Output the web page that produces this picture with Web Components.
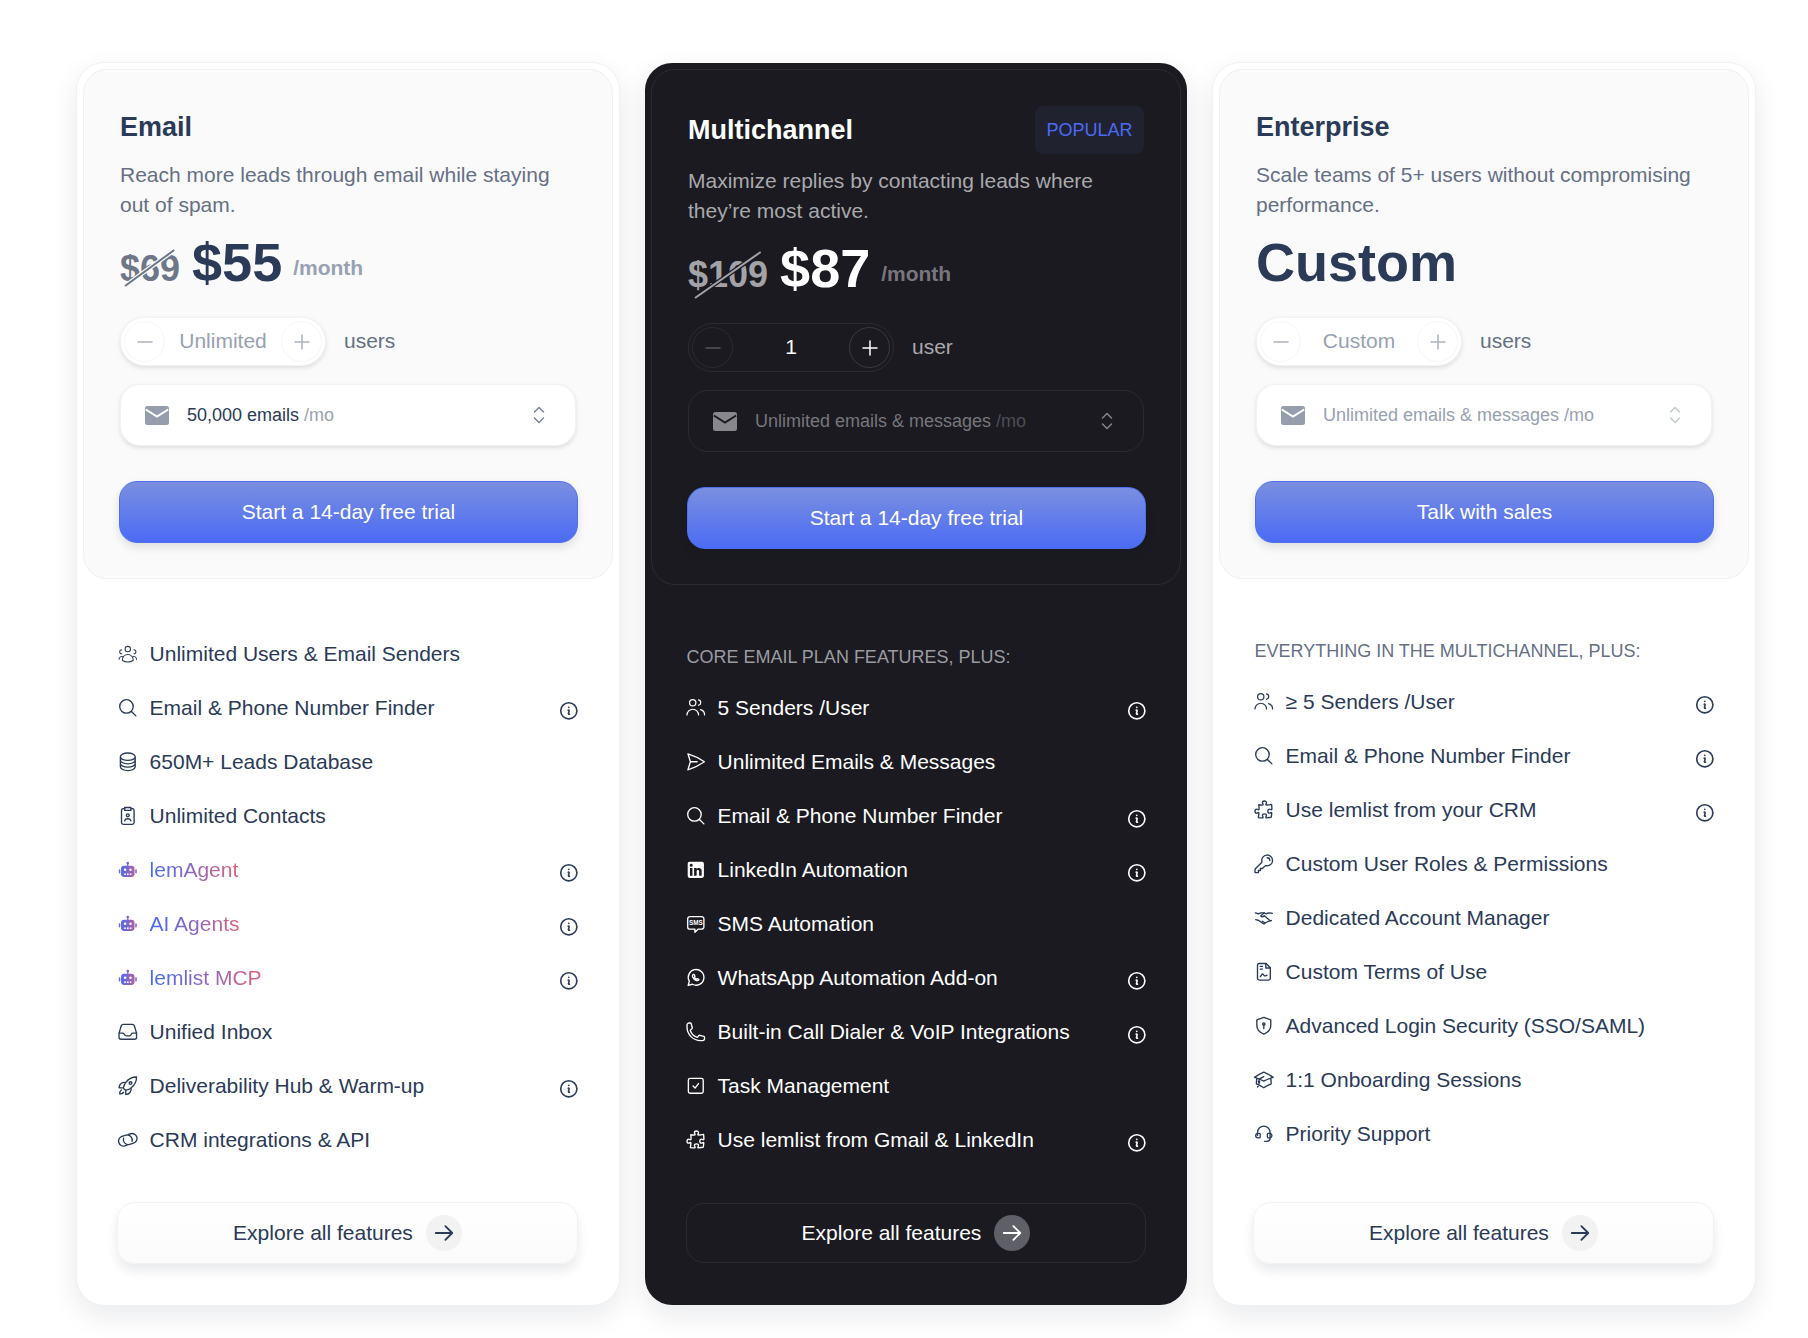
<!DOCTYPE html>
<html lang="en">
<head>
<meta charset="utf-8">
<title>Pricing</title>
<style>
    body {
        margin: 0;
        background: #ffffff;
        font-family: "Liberation Sans", Arial, sans-serif;
    }
</style>
</head>
<body>

<pricing-page>
    <plan-card>
        <span slot="title">Email</span>
        <span slot="desc">Reach more leads through email while staying out of spam.</span>
        <plan-price slot="price" old="$69" amount="$55"></plan-price>
        <seat-stepper slot="stepper" value="Unlimited" label="users"></seat-stepper>
        <volume-select slot="volume" suffix="/mo" strong>50,000 emails</volume-select>
        <cta-button slot="cta">Start a 14-day free trial</cta-button>

        <feature-item icon="userGroup">Unlimited Users &amp; Email Senders</feature-item>
        <feature-item icon="search" info>Email &amp; Phone Number Finder</feature-item>
        <feature-item icon="database">650M+ Leads Database</feature-item>
        <feature-item icon="contact">Unlimited Contacts</feature-item>
        <feature-item icon="robot" info ai>lemAgent</feature-item>
        <feature-item icon="robot" info ai>AI Agents</feature-item>
        <feature-item icon="robot" info ai>lemlist MCP</feature-item>
        <feature-item icon="inbox">Unified Inbox</feature-item>
        <feature-item icon="rocket" info>Deliverability Hub &amp; Warm-up</feature-item>
        <feature-item icon="link">CRM integrations &amp; API</feature-item>

        <explore-link slot="footer">Explore all features</explore-link>
    </plan-card>

    <plan-card dark>
        <span slot="title">Multichannel</span>
        <span slot="badge">POPULAR</span>
        <span slot="desc">Maximize replies by contacting leads where they’re most active.</span>
        <plan-price slot="price" old="$109" amount="$87" wide></plan-price>
        <seat-stepper slot="stepper" value="1" label="user" active></seat-stepper>
        <volume-select slot="volume" suffix="/mo">Unlimited emails &amp; messages</volume-select>
        <cta-button slot="cta">Start a 14-day free trial</cta-button>

        <span slot="label">Core email plan features, plus:</span>
        <feature-item icon="users" info>5 Senders /User</feature-item>
        <feature-item icon="send">Unlimited Emails &amp; Messages</feature-item>
        <feature-item icon="search" info>Email &amp; Phone Number Finder</feature-item>
        <feature-item icon="linkedin" info>LinkedIn Automation</feature-item>
        <feature-item icon="sms">SMS Automation</feature-item>
        <feature-item icon="whatsapp" info>WhatsApp Automation Add-on</feature-item>
        <feature-item icon="phone" info>Built-in Call Dialer &amp; VoIP Integrations</feature-item>
        <feature-item icon="task">Task Management</feature-item>
        <feature-item icon="puzzle" info>Use lemlist from Gmail &amp; LinkedIn</feature-item>

        <explore-link slot="footer">Explore all features</explore-link>
    </plan-card>

    <plan-card>
        <span slot="title">Enterprise</span>
        <span slot="desc">Scale teams of 5+ users without compromising performance.</span>
        <plan-price slot="price" amount="Custom"></plan-price>
        <seat-stepper slot="stepper" value="Custom" label="users"></seat-stepper>
        <volume-select slot="volume" suffix="/mo" faded>Unlimited emails &amp; messages</volume-select>
        <cta-button slot="cta">Talk with sales</cta-button>

        <span slot="label">Everything in the Multichannel, plus:</span>
        <feature-item icon="users" info>≥ 5 Senders /User</feature-item>
        <feature-item icon="search" info>Email &amp; Phone Number Finder</feature-item>
        <feature-item icon="puzzle" info>Use lemlist from your CRM</feature-item>
        <feature-item icon="key">Custom User Roles &amp; Permissions</feature-item>
        <feature-item icon="handshake">Dedicated Account Manager</feature-item>
        <feature-item icon="document">Custom Terms of Use</feature-item>
        <feature-item icon="shield">Advanced Login Security (SSO/SAML)</feature-item>
        <feature-item icon="cap">1:1 Onboarding Sessions</feature-item>
        <feature-item icon="headset">Priority Support</feature-item>

        <explore-link slot="footer">Explore all features</explore-link>
    </plan-card>
</pricing-page>

<script>
const ICONS = {
    userGroup: '<g stroke-width="1.15"><circle cx="12" cy="6.750" r="3"/><path d="M6 18.700a6 6 0 0 1 12 0"/><path d="M6 19.400A11.900 11.900 0 0 0 12 21a11.900 11.900 0 0 0 6-1.600"/><path d="M5.250 7.500a2.250 2.250 0 1 0 0 4.500M18.750 7.500a2.250 2.250 0 1 1 0 4.500"/><path d="M2.300 18.200a3 3 0 0 1 4.600-2.700M21.700 18.200a3 3 0 0 0-4.600-2.700"/></g>',
    users: '<g stroke-width="1.350"><circle cx="8.600" cy="6.400" r="3.500"/><path d="M2.250 20a6.400 6.400 0 0 1 12.800 0"/><path d="M15 3.300a3 3 0 0 1 0 5.900"/><path d="M17.300 14.100a6 6 0 0 1 4.450 5.800"/></g>',
    search: '<path d="m21 21-5.197-5.197m0 0A7.5 7.5 0 1 0 5.196 5.196a7.5 7.5 0 0 0 10.607 10.607Z"/>',
    database: '<path d="M20.25 6.375c0 2.278-3.694 4.125-8.25 4.125S3.75 8.653 3.75 6.375m16.5 0c0-2.278-3.694-4.125-8.25-4.125S3.75 4.097 3.75 6.375m16.5 0v11.25c0 2.278-3.694 4.125-8.25 4.125s-8.25-1.847-8.25-4.125V6.375m16.5 0v3.75m-16.5-3.75v3.75m16.5 0v3.75C20.25 16.153 16.556 18 12 18s-8.25-1.847-8.25-4.125v-3.75m16.5 0c0 2.278-3.694 4.125-8.25 4.125s-8.25-1.847-8.25-4.125"/>',
    contact: '<path d="M8.5 4H7a2 2 0 0 0-2 2v13.5a2 2 0 0 0 2 2h10a2 2 0 0 0 2-2V6a2 2 0 0 0-2-2h-1.5"/><path d="M8.5 2.75h7V6h-7z"/><circle cx="12" cy="11.5" r="1.6"/><path d="M8.5 17.5c.5-1.7 2-2.2 3.500-2.200s3 .5 3.500 2.200"/>',
    inbox: '<path d="M2.25 13.5h3.86a2.25 2.25 0 0 1 2.012 1.244l.256.512a2.25 2.25 0 0 0 2.013 1.244h3.218a2.25 2.25 0 0 0 2.013-1.244l.256-.512a2.25 2.25 0 0 1 2.013-1.244h3.859m-19.5.338V18a2.25 2.25 0 0 0 2.25 2.25h15A2.25 2.25 0 0 0 21.75 18v-4.162c0-.224-.034-.447-.1-.661L19.24 5.338a2.25 2.25 0 0 0-2.15-1.588H6.911a2.25 2.25 0 0 0-2.15 1.588L2.35 13.177a2.25 2.25 0 0 0-.1.661Z"/>',
    rocket: '<path d="M15.59 14.37a6 6 0 0 1-5.84 7.38v-4.8m5.84-2.58a14.98 14.98 0 0 0 6.16-12.12A14.98 14.98 0 0 0 9.631 8.41m5.96 5.96a14.926 14.926 0 0 1-5.841 2.58m-.119-8.54a6 6 0 0 0-7.381 5.84h4.8m2.581-5.84a14.927 14.927 0 0 0-2.58 5.84m2.699 2.7c-.103.021-.207.041-.311.06a15.09 15.09 0 0 1-2.448-2.448 14.9 14.9 0 0 1 .06-.312m-2.24 2.39a4.493 4.493 0 0 0-1.757 4.306 4.493 4.493 0 0 0 4.306-1.758M16.5 9a1.5 1.5 0 1 1-3 0 1.5 1.5 0 0 1 3 0Z"/>',
    link: '<g transform="rotate(-17 12 12)"><path d="M9.500 17.500H7a5.500 5.500 0 0 1 0-11h4.500a5.500 5.500 0 0 1 4.500 8.500"/><path d="M14.500 6.500H17a5.500 5.500 0 0 1 0 11h-4.500A5.500 5.500 0 0 1 8 9"/></g>',
    send: '<path d="M6 12 3.269 3.125A59.769 59.769 0 0 1 21.485 12 59.768 59.768 0 0 1 3.27 20.875L5.999 12Zm0 0h7.5"/>',
    phone: '<path d="M2.25 6.75c0 8.284 6.716 15 15 15h2.25a2.25 2.25 0 0 0 2.25-2.25v-1.372c0-.516-.351-.966-.852-1.091l-4.423-1.106c-.44-.11-.902.055-1.173.417l-.97 1.293c-.282.376-.769.542-1.21.38a12.035 12.035 0 0 1-7.143-7.143c-.162-.441.004-.928.38-1.21l1.293-.97c.363-.271.527-.734.417-1.173L6.963 3.102a1.125 1.125 0 0 0-1.091-.852H4.5A2.25 2.25 0 0 0 2.25 4.5v2.25Z"/>',
    puzzle: '<path d="M14.25 6.087c0-.355.186-.676.401-.959.221-.29.349-.634.349-1.003 0-1.036-1.007-1.875-2.25-1.875s-2.25.84-2.25 1.875c0 .369.128.713.349 1.003.215.283.401.604.401.959a.64.64 0 0 1-.657.643 48.39 48.39 0 0 1-4.163-.3c.186 1.613.293 3.25.315 4.907a.656.656 0 0 1-.658.663c-.355 0-.676-.186-.959-.401a1.647 1.647 0 0 0-1.003-.349c-1.036 0-1.875 1.007-1.875 2.25s.84 2.25 1.875 2.25c.369 0 .713-.128 1.003-.349.283-.215.604-.401.959-.401.31 0 .555.26.532.57a48.039 48.039 0 0 1-.642 5.056c1.518.19 3.058.309 4.616.354a.64.64 0 0 0 .657-.643c0-.355-.186-.676-.401-.959a1.647 1.647 0 0 1-.349-1.003c0-1.035 1.008-1.875 2.25-1.875 1.243 0 2.25.84 2.25 1.875 0 .369-.128.713-.349 1.003-.215.283-.4.604-.4.959 0 .333.277.599.61.58a48.1 48.1 0 0 0 5.427-.63 48.05 48.05 0 0 0 .582-4.717.532.532 0 0 0-.533-.57c-.355 0-.676.186-.959.401-.29.221-.634.349-1.003.349-1.035 0-1.875-1.007-1.875-2.25s.84-2.25 1.875-2.25c.37 0 .713.128 1.003.349.283.215.604.401.96.401a.656.656 0 0 0 .658-.663 48.422 48.422 0 0 0-.37-5.36c-1.886.342-3.81.574-5.766.689a.578.578 0 0 1-.61-.58Z"/>',
    key: '<path d="M15.750 5.25a3 3 0 0 1 3 3m3 0a6 6 0 0 1-7.029 5.912c-.563-.097-1.159.026-1.563.43L10.5 17.25H8.25v2.25H6v2.25H2.25v-2.818c0-.597.237-1.17.659-1.591l6.499-6.499c.404-.404.527-1 .43-1.563A6 6 0 1 1 21.75 8.25Z"/>',
    cap: '<path d="M4.26 10.147a60.438 60.438 0 0 0-.491 6.347A48.62 48.62 0 0 1 12 20.904a48.62 48.62 0 0 1 8.232-4.41 60.46 60.46 0 0 0-.491-6.347m-15.482 0a50.636 50.636 0 0 0-2.658-.813A59.906 59.906 0 0 1 12 3.493a59.903 59.903 0 0 1 10.399 5.84c-.896.248-1.783.52-2.658.814m-15.482 0A50.717 50.717 0 0 1 12 13.489a50.702 50.702 0 0 1 7.74-3.342M6.75 15a.75.75 0 1 0 0-1.5.75.75 0 0 0 0 1.5Zm0 0v-3.675A55.378 55.378 0 0 1 12 8.443m-7.007 11.55A5.981 5.981 0 0 0 6.750 15.75v-1.5"/>',
    handshake: '<path d="M2.500 6.500 6 7.500l3-1h3.500l2 1 3-1 4 .5"/><path d="M12.500 6.500 8.500 10c1.300 1.200 2.800 1 4-.2l6 5"/><path d="M3 14l3.500 1 5 3.500c1 .5 2 0 2.200-1l3.300-1.500 3.500-1"/><path d="M10.500 15.800l2.500 1.700"/>',
    document: '<path d="M7 2.750h7.500l4.750 4.750v11.750a2 2 0 0 1-2 2H7a2 2 0 0 1-2-2V4.750a2 2 0 0 1 2-2Z"/><path d="M14.250 2.750v5h5"/><path d="M8 6h2.500M8 9h2.500"/><path d="M8 17.500c1-.5 1.500-3 2.500-3s1.500 2 2.500 2 1.500-.7 2.500-.7"/>',
    shield: '<path d="M12 2.750 19.750 5.500v6c0 4.700-3.100 8-7.750 9.750-4.650-1.750-7.750-5.050-7.750-9.750v-6Z"/><circle cx="12" cy="10" r="1.300"/><path d="M12 11.300v3.700"/>',
    headset: '<path d="M5 14v-3.500a7 7 0 0 1 14 0V17a3.500 3.500 0 0 1-3.500 3.500H13"/><path d="M5.500 11.500H7a1 1 0 0 1 1 1v3a1 1 0 0 1-1 1H5.500A2.500 2.500 0 0 1 3 14a2.500 2.500 0 0 1 2.500-2.500Z"/><path d="M18.500 11.500H17a1 1 0 0 0-1 1v3a1 1 0 0 0 1 1h1.500A2.500 2.500 0 0 0 21 14a2.500 2.500 0 0 0-2.500-2.500Z"/>',
    whatsapp: '<path d="M3.500 20.500 4.800 15.900A8.700 8.700 0 1 1 8.200 19.200Z"/><path d="M9 8.300c-.8.600-1 1.600-.5 2.800.8 1.800 2.300 3.200 4.200 3.900 1.200.4 2.200 0 2.800-.9l-1.800-1.200-.9.700c-1-.5-1.900-1.300-2.400-2.400l.7-.9-.9-2Z"/>',
    task: '<rect x="3.750" y="3.750" width="16.500" height="16.500" rx="2"/><path d="m9 12.200 2.200 2.300L15 9.500"/>',
    sms: '<path d="M5.500 4h13A2.500 2.500 0 0 1 21 6.500v9a2.500 2.500 0 0 1-2.500 2.500h-4l-3.500 3.500V18H5.500A2.500 2.500 0 0 1 3 15.500v-9A2.500 2.500 0 0 1 5.500 4Z"/><text x="12" y="13.300" text-anchor="middle" font-size="7" font-weight="700" fill="currentColor" stroke="none" font-family="Liberation Sans, sans-serif">SMS</text>',
    linkedin: '<path fill="currentColor" stroke="none" d="M19 3a2 2 0 0 1 2 2v14a2 2 0 0 1-2 2H5a2 2 0 0 1-2-2V5a2 2 0 0 1 2-2h14m-.5 15.500v-5.300a3.260 3.260 0 0 0-3.260-3.260c-.85 0-1.840.52-2.320 1.300v-1.110h-2.790v8.370h2.790v-4.930c0-.77.62-1.400 1.390-1.400a1.400 1.400 0 0 1 1.400 1.400v4.930h2.790M6.880 8.560a1.680 1.680 0 0 0 1.680-1.680c0-.93-.75-1.690-1.680-1.690a1.690 1.690 0 0 0-1.690 1.690c0 .93.76 1.680 1.690 1.680m1.390 9.940v-8.370H5.500v8.370h2.770z"/>',
    robot: '<defs><linearGradient id="bot" x1="0" x2="1" y1="0" y2="0"><stop offset="0" stop-color="#4b6bf5"/><stop offset="1" stop-color="#b45f9f"/></linearGradient></defs><g fill="url(#bot)" stroke="none"><circle cx="12" cy="4.500" r="1.500"/><rect x="11.300" y="5" width="1.400" height="3"/><rect x="4.500" y="7.500" width="15" height="12.500" rx="3.500"/><rect x="2" y="11.500" width="1.700" height="4.500" rx=".85"/><rect x="20.300" y="11.500" width="1.700" height="4.500" rx=".85"/></g><g fill="#fff" stroke="none"><circle cx="9" cy="12" r="1.400"/><circle cx="15" cy="12" r="1.400"/><rect x="8" y="16" width="1.800" height="1.800"/><rect x="11.100" y="16" width="1.800" height="1.800"/><rect x="14.200" y="16" width="1.800" height="1.800"/></g>',
    info: '<path d="m11.250 11.250.041-.02a.75.75 0 0 1 1.063.852l-.708 2.836a.75.75 0 0 0 1.063.853l.041-.021M21 12a9 9 0 1 1-18 0 9 9 0 0 1 18 0Zm-9-3.750h.008v.008H12V8.250Z"/>',
    arrow: '<path d="M13.500 4.500 21 12m0 0-7.500 7.500M21 12H3"/>',
    minus: '<path d="M5 12h14"/>',
    plus: '<path d="M12 5v14M5 12h14"/>'
};

// small helper so each component does not repeat the svg attributes
function iconSvg(name, width, stroke = 1.5) {
    return `<svg xmlns="http://www.w3.org/2000/svg" viewBox="0 0 24 24" width="${width}" height="${width}" fill="none" stroke="currentColor" stroke-width="${stroke}" stroke-linecap="round" stroke-linejoin="round" aria-hidden="true">${ICONS[name]}</svg>`;
}

class PricingPage extends HTMLElement {
    constructor() {
        super();
        this.attachShadow({ mode: 'open' });
        this.shadowRoot.innerHTML = `
            <style>
                :host {
                    display: grid;
                    grid-template-columns: repeat(3, 544px);
                    gap: 24px;
                    padding: 62px 52px 32px 76px;
                    min-height: 1244px;
                }
            </style>
            <slot></slot>
        `;
    }
}

class PlanCard extends HTMLElement {
    constructor() {
        super();
        this.attachShadow({ mode: 'open' });
        this.shadowRoot.innerHTML = `
            <style>
                :host {
                    --ink: #2a3a57;
                    --sub: #667085;
                    --old: #6d7788;
                    --per: #98a1b2;
                    --card-bg: #ffffff;
                    --card-border: #f1f1f1;
                    --panel-bg: #fafafa;
                    --panel-border: #f0f0f0;
                    --control-bg: #ffffff;
                    --control-border: #f2f2f2;
                    --control-shadow: 0 2px 4px rgba(16, 24, 40, 0.12);
                    --muted: #98a1b2;
                    --round-border: #f6f6f6;
                    --mail: #969eae;
                    --mail-line: #ffffff;
                    --chevron: #7b8494;
                    --explore-bg: linear-gradient(180deg, #ffffff, #fbfbfb);
                    --explore-shadow: 0 7px 12px rgba(16, 24, 40, 0.09);
                    --explore-height: 62px;
                    --arrow-bg: #f2f2f2;
                    display: flex;
                    flex-direction: column;
                    box-sizing: border-box;
                    background: var(--card-bg);
                    background-clip: padding-box;
                    border: 1px solid var(--card-border);
                    border-radius: 28px;
                    padding: 6px 0 41px;
                    box-shadow: 0 10px 28px rgba(16, 24, 40, 0.09);
                    color: var(--ink);
                }
                :host([dark]) {
                    --ink: #ffffff;
                    --sub: #a9a9ad;
                    --old: #a3a3a7;
                    --per: #77777c;
                    --card-bg: #1a1a20;
                    --card-border: transparent;
                    --panel-bg: #1a1a20;
                    --panel-border: #2b2b32;
                    --control-bg: transparent;
                    --control-border: #2b2b32;
                    --control-shadow: none;
                    --muted: #77777c;
                    --round-border: #2b2b32;
                    --mail: #88888c;
                    --mail-line: #1a1a20;
                    --chevron: #85858a;
                    --explore-bg: transparent;
                    --explore-shadow: none;
                    --explore-height: 60px;
                    --arrow-bg: #5f5f68;
                }
                .panel {
                    margin: 0 6px;
                    padding: 36px 36px 35px;
                    background: var(--panel-bg);
                    border: 1px solid var(--panel-border);
                    border-radius: 24px;
                }
                header {
                    display: flex;
                    justify-content: space-between;
                    align-items: center;
                    min-height: 42px;
                    margin-bottom: 12px;
                }
                :host([dark]) header {
                    min-height: 48px;
                }
                h2 {
                    margin: 0;
                    font-size: 27px;
                    line-height: 38px;
                    font-weight: 700;
                }
                ::slotted([slot="badge"]) {
                    display: block;
                    padding: 0 11.500px;
                    line-height: 48px;
                    border-radius: 8px;
                    background: #20222f;
                    color: #4b6bf5;
                    font-size: 18px;
                }
                p {
                    margin: 0;
                    font-size: 21px;
                    line-height: 30px;
                    color: var(--sub);
                }
                .features {
                    padding: 48px 40px 0;
                    display: flex;
                    flex-direction: column;
                }
                ::slotted([slot="label"]) {
                    display: block;
                    margin: 9px 0 9px 1.500px;
                    font-size: 18px;
                    line-height: 30px;
                    text-transform: uppercase;
                    color: var(--sub);
                }
                :host([dark]) ::slotted([slot="label"]) {
                    color: #9b9ba0;
                }
                footer {
                    margin-top: auto;
                    padding: 0 41px 0 40px;
                }
                :host([dark]) footer {
                    padding: 0 41px 1px;
                }
            </style>
            <section class="panel">
                <header>
                    <h2><slot name="title"></slot></h2>
                    <slot name="badge"></slot>
                </header>
                <p><slot name="desc"></slot></p>
                <slot name="price"></slot>
                <slot name="stepper"></slot>
                <slot name="volume"></slot>
                <slot name="cta"></slot>
            </section>
            <div class="features">
                <slot name="label"></slot>
                <slot></slot>
            </div>
            <footer><slot name="footer"></slot></footer>
        `;
    }
}

class PlanPrice extends HTMLElement {
    constructor() {
        super();
        this.attachShadow({ mode: 'open' });
    }

    connectedCallback() {
        const old = this.getAttribute('old');
        const amount = this.getAttribute('amount');
        this.shadowRoot.innerHTML = `
            <style>
                :host {
                    display: block;
                    height: 97px;
                    box-sizing: border-box;
                    font-weight: 700;
                    line-height: 85px;
                    font-size: 54px;
                    color: var(--ink);
                    white-space: nowrap;
                }
                .old {
                    position: relative;
                    display: inline-block;
                    margin-right: 12px;
                    font-size: 36px;
                    line-height: 36px;
                    color: var(--old);
                }
                .old svg {
                    position: absolute;
                    left: 9%;
                    top: -1px;
                    width: 82%;
                    height: 36px;
                    overflow: visible;
                }
                :host([wide]) .old svg {
                    top: -5px;
                    height: 46px;
                }
                .per {
                    margin-left: 11px;
                    font-size: 21px;
                    color: var(--per);
                    vertical-align: 6px;
                }
            </style>
            ${old ? `<span class="old">${old}<svg viewBox="0 0 100 100" preserveAspectRatio="none"><line x1="0" y1="100" x2="100" y2="0" stroke="var(--panel-bg)" stroke-width="4.5" vector-effect="non-scaling-stroke"/><line x1="0" y1="100" x2="100" y2="0" stroke="currentColor" stroke-width="2" vector-effect="non-scaling-stroke"/></svg></span>` : ''}<span>${amount}</span>${old ? '<span class="per">/month</span>' : ''}
        `;
    }
}

class SeatStepper extends HTMLElement {
    constructor() {
        super();
        this.attachShadow({ mode: 'open' });
    }

    connectedCallback() {
        this.shadowRoot.innerHTML = `
            <style>
                :host {
                    display: flex;
                    align-items: center;
                    gap: 18px;
                    font-size: 21px;
                    color: var(--sub);
                }
                .box {
                    display: flex;
                    align-items: center;
                    box-sizing: border-box;
                    width: 206px;
                    height: 49px;
                    padding: 0 3px;
                    border: 1px solid var(--control-border);
                    border-radius: 25px;
                    background: var(--control-bg);
                    box-shadow: var(--control-shadow);
                }
                .value, .unit {
                    padding-bottom: 2px;
                }
                .value {
                    flex: 1;
                    text-align: center;
                    color: var(--muted);
                }
                :host([active]) .value {
                    color: var(--ink);
                }
                .round {
                    display: flex;
                    align-items: center;
                    justify-content: center;
                    width: 41px;
                    height: 41px;
                    box-sizing: border-box;
                    border: 1px solid var(--round-border);
                    border-radius: 50%;
                    color: #adb3bf;
                }
                :host([active]) .round {
                    color: #55555b;
                }
                :host([active]) .round.plus {
                    color: #ffffff;
                    border-color: #3a3a42;
                }
            </style>
            <div class="box">
                <span class="round">${iconSvg('minus', 24)}</span>
                <span class="value">${this.getAttribute('value')}</span>
                <span class="round plus">${iconSvg('plus', 24)}</span>
            </div>
            <span class="unit">${this.getAttribute('label')}</span>
        `;
    }
}

class VolumeSelect extends HTMLElement {
    constructor() {
        super();
        this.attachShadow({ mode: 'open' });
    }

    connectedCallback() {
        this.shadowRoot.innerHTML = `
            <style>
                :host {
                    display: flex;
                    align-items: center;
                    box-sizing: border-box;
                    height: 62px;
                    margin-top: 18px;
                    padding: 0 24px;
                    border: 1px solid var(--control-border);
                    border-radius: 20px;
                    background: var(--control-bg);
                    box-shadow: var(--control-shadow);
                    font-size: 18px;
                    color: var(--muted);
                }
                :host([strong]) .text {
                    color: var(--ink);
                }
                .mail {
                    flex: none;
                    margin-right: 18px;
                }
                .suffix {
                    margin-left: 5px;
                }
                :host([strong]) .suffix {
                    color: #9aa2b1;
                }
                :host-context(plan-card[dark]) .suffix {
                    color: #4e4e54;
                }
                .chevrons {
                    margin-left: auto;
                    margin-right: 6px;
                    color: var(--chevron);
                }
                :host([faded]) .chevrons {
                    color: #c3c8d1;
                }
            </style>
            <svg class="mail" width="24" height="19" viewBox="0 0 24 19">
                <rect width="24" height="19" rx="2.500" fill="var(--mail)"/>
                <path d="M0.800 3.500 12 10.500 23.200 3.500" fill="none" stroke="var(--mail-line)" stroke-width="2"/>
            </svg>
            <span class="text"><slot></slot></span>
            <span class="suffix">${this.getAttribute('suffix')}</span>
            <svg class="chevrons" width="12" height="18" viewBox="0 0 12 18" fill="none" stroke="currentColor" stroke-width="1.500" stroke-linecap="round" stroke-linejoin="round">
                <path d="M1.500 6 6 1.500 10.500 6M1.500 12 6 16.500 10.500 12"/>
            </svg>
        `;
    }
}

class CtaButton extends HTMLElement {
    constructor() {
        super();
        this.attachShadow({ mode: 'open' });
        this.shadowRoot.innerHTML = `
            <style>
                :host {
                    display: flex;
                    align-items: center;
                    justify-content: center;
                    box-sizing: border-box;
                    height: 62px;
                    margin: 35px -2px 0 -1px;
                    border: 1px solid #4f6ef2;
                    border-radius: 18px;
                    background: linear-gradient(180deg, #7a8fe0, #4b6bf5);
                    box-shadow: 0 4px 8px rgba(16, 24, 40, 0.12);
                    color: #ffffff;
                    font-size: 21px;
                }
            </style>
            <slot></slot>
        `;
    }
}

class FeatureItem extends HTMLElement {
    constructor() {
        super();
        this.attachShadow({ mode: 'open' });
    }

    connectedCallback() {
        const info = this.hasAttribute('info');
        this.shadowRoot.innerHTML = `
            <style>
                :host {
                    display: flex;
                    align-items: center;
                    height: 54px;
                    font-size: 21px;
                    color: var(--ink);
                    white-space: nowrap;
                }
                svg {
                    display: block;
                }
                .icon {
                    flex: none;
                    margin-right: 11px;
                }
                .text {
                    flex: 1;
                }
                :host([ai]) .label {
                    background: linear-gradient(90deg, #4b6bf5 8%, #e0607a);
                    -webkit-background-clip: text;
                    background-clip: text;
                    color: transparent;
                }
                .info {
                    flex: none;
                    margin: 6px -0.500px 0 0;
                }
            </style>
            <span class="icon">${iconSvg(this.getAttribute('icon'), 21.6, 1.5)}</span>
            <span class="text"><span class="label"><slot></slot></span></span>
            ${info ? `<span class="info">${iconSvg('info', 21.6, 1.8)}</span>` : ''}
        `;
    }
}

class ExploreLink extends HTMLElement {
    constructor() {
        super();
        this.attachShadow({ mode: 'open' });
        this.shadowRoot.innerHTML = `
            <style>
                :host {
                    display: flex;
                    align-items: center;
                    justify-content: center;
                    gap: 13px;
                    box-sizing: border-box;
                    height: var(--explore-height);
                    border: 1px solid var(--control-border);
                    border-radius: 18px;
                    background: var(--explore-bg);
                    box-shadow: var(--explore-shadow);
                    font-size: 21px;
                    color: var(--ink);
                }
                .arrow {
                    display: flex;
                    align-items: center;
                    justify-content: center;
                    width: 36px;
                    height: 36px;
                    border-radius: 50%;
                    background: var(--arrow-bg);
                }
            </style>
            <slot></slot>
            <span class="arrow">${iconSvg('arrow', 22, 2)}</span>
        `;
    }
}

customElements.define('pricing-page', PricingPage);
customElements.define('plan-card', PlanCard);
customElements.define('plan-price', PlanPrice);
customElements.define('seat-stepper', SeatStepper);
customElements.define('volume-select', VolumeSelect);
customElements.define('cta-button', CtaButton);
customElements.define('feature-item', FeatureItem);
customElements.define('explore-link', ExploreLink);
</script>
</body>
</html>
